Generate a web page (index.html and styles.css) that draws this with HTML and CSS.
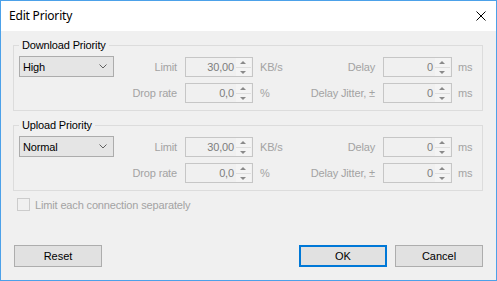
FILE: index.html
```html
<!DOCTYPE html>
<html lang="en">
<head>
    <meta charset="UTF-8">
    <title>Edit Priority</title>
    <link rel="stylesheet" href="styles.css">
</head>
<body>
    <div class="window">
        <div class="titlebar">
            <span class="title">Edit Priority</span>
            <svg class="close" width="10" height="10" viewBox="0 0 10 10">
                <path d="M0.5 0.5 L9.5 9.5 M9.5 0.5 L0.5 9.5" stroke="#000" stroke-width="1" fill="none"/>
            </svg>
        </div>

        <div class="dialog">
            <fieldset class="group">
                <legend>Download Priority</legend>
                <div class="grid">
                    <div class="combo">
                        <span>High</span>
                        <svg class="chevron" width="8" height="5" viewBox="0 0 8 5"><path d="M0.5 0.5 L4 4 L7.5 0.5" stroke="#606060" fill="none"/></svg>
                    </div>
                    <span class="lbl">Limit</span>
                    <div class="spin"><span class="val">30,00</span><div class="arrows"><span class="up"></span><span class="down"></span></div></div>
                    <span class="unit">KB/s</span>
                    <span class="lbl">Delay</span>
                    <div class="spin"><span class="val">0</span><div class="arrows"><span class="up"></span><span class="down"></span></div></div>
                    <span class="unit ms">ms</span>

                    <span></span>
                    <span class="lbl">Drop rate</span>
                    <div class="spin"><span class="val">0,0</span><div class="arrows"><span class="up"></span><span class="down"></span></div></div>
                    <span class="unit">%</span>
                    <span class="lbl">Delay Jitter, ±</span>
                    <div class="spin"><span class="val">0</span><div class="arrows"><span class="up"></span><span class="down"></span></div></div>
                    <span class="unit ms">ms</span>
                </div>
            </fieldset>

            <fieldset class="group">
                <legend>Upload Priority</legend>
                <div class="grid">
                    <div class="combo">
                        <span>Normal</span>
                        <svg class="chevron" width="8" height="5" viewBox="0 0 8 5"><path d="M0.5 0.5 L4 4 L7.5 0.5" stroke="#606060" fill="none"/></svg>
                    </div>
                    <span class="lbl">Limit</span>
                    <div class="spin"><span class="val">30,00</span><div class="arrows"><span class="up"></span><span class="down"></span></div></div>
                    <span class="unit">KB/s</span>
                    <span class="lbl">Delay</span>
                    <div class="spin"><span class="val">0</span><div class="arrows"><span class="up"></span><span class="down"></span></div></div>
                    <span class="unit ms">ms</span>

                    <span></span>
                    <span class="lbl">Drop rate</span>
                    <div class="spin"><span class="val">0,0</span><div class="arrows"><span class="up"></span><span class="down"></span></div></div>
                    <span class="unit">%</span>
                    <span class="lbl">Delay Jitter, ±</span>
                    <div class="spin"><span class="val">0</span><div class="arrows"><span class="up"></span><span class="down"></span></div></div>
                    <span class="unit ms">ms</span>
                </div>
            </fieldset>

            <div class="check-row">
                <span class="checkbox"></span>
                <span class="check-label">Limit each connection separately</span>
            </div>

            <div class="buttons">
                <button class="btn">Reset</button>
                <div class="right">
                    <button class="btn default">OK</button>
                    <button class="btn">Cancel</button>
                </div>
            </div>
        </div>
    </div>
</body>
</html>
```

FILE: styles.css
```css
* {
    box-sizing: border-box;
}
body {
    margin: 0;
    font-family: 'Liberation Sans', Arial, sans-serif;
    font-size: 11px;
    letter-spacing: -0.15px;
    color: #000;
    background: #f0f0f0;
}
.window {
    width: 497px;
    height: 281px;
    border: 1px solid #4ca1e9;
    background: #f0f0f0;
    display: flex;
    flex-direction: column;
}
.titlebar {
    height: 30px;
    background: #fff;
    display: flex;
    align-items: center;
    justify-content: space-between;
    padding: 0 10px 0 8px;
    flex-shrink: 0;
}
.title {
    font-family: 'Noto Sans', sans-serif;
    font-size: 12px;
    letter-spacing: -0.2px;
    color: #000;
    margin-top: -1px;
}
.close {
    display: block;
    margin-top: -1px;
}
.dialog {
    flex: 1;
    display: flex;
    flex-direction: column;
    padding: 0 13px 13px 12px;
}
.group {
    margin: 8px 0 0 0;
    padding: 5px 5px 7px 5px;
    border: 1px solid #dcdcdc;
    min-width: 0;
}
.group + .group {
    margin-top: 8px;
}
.group legend {
    padding: 0 3px;
    line-height: 13px;
    color: #000;
}
.grid {
    display: grid;
    grid-template-columns: 95px 71px 68px 37px 93px 69px auto;
    grid-template-rows: 20px 20px;
    row-gap: 6px;
    align-items: center;
}
.combo {
    height: 21px;
    align-self: start;
    margin-top: -1px;
    background: #e5e5e5;
    border: 1px solid #acacac;
    display: flex;
    align-items: center;
    justify-content: space-between;
    padding: 0 6px 0 3px;
}
.chevron {
    display: block;
}
.lbl {
    text-align: right;
    padding-right: 8px;
    color: #a3a3a3;
    white-space: nowrap;
}
.unit {
    padding-left: 7px;
    color: #a3a3a3;
}
.unit.ms {
    padding-left: 6px;
}
.spin {
    height: 20px;
    border: 1px solid #c6c6c6;
    display: flex;
    align-items: center;
    justify-content: flex-end;
}
.val {
    color: #7d7d7d;
    padding-right: 2px;
}
.arrows {
    width: 15px;
    height: 18px;
    display: flex;
    flex-direction: column;
    margin-right: 1px;
}
.arrows span {
    flex: 1;
    position: relative;
    background: #f4f4f4;
}
.arrows .up {
    border-bottom: 1px solid #dedede;
}
.arrows .up::after,
.arrows .down::after {
    content: "";
    position: absolute;
    left: 4px;
    border-left: 3px solid transparent;
    border-right: 3px solid transparent;
}
.arrows .up::after {
    top: 3px;
    border-bottom: 3px solid #8a8a8a;
}
.arrows .down::after {
    top: 3px;
    border-top: 3px solid #8a8a8a;
}
.check-row {
    display: flex;
    align-items: center;
    margin-top: 7px;
    padding-left: 4px;
}
.checkbox {
    width: 13px;
    height: 13px;
    border: 1px solid #cccccc;
    background: #f0f0f0;
}
.check-label {
    margin-left: 5px;
    color: #a3a3a3;
}
.buttons {
    margin-top: auto;
    display: flex;
    justify-content: space-between;
    padding-left: 1px;
}
.right {
    display: flex;
    gap: 8px;
}
.btn {
    width: 88px;
    height: 22px;
    background: #e1e1e1;
    border: 1px solid #adadad;
    font-family: 'Liberation Sans', Arial, sans-serif;
    font-size: 11px;
    color: #000;
    padding: 0;
}
.btn.default {
    border: 2px solid #0078d7;
}
```
